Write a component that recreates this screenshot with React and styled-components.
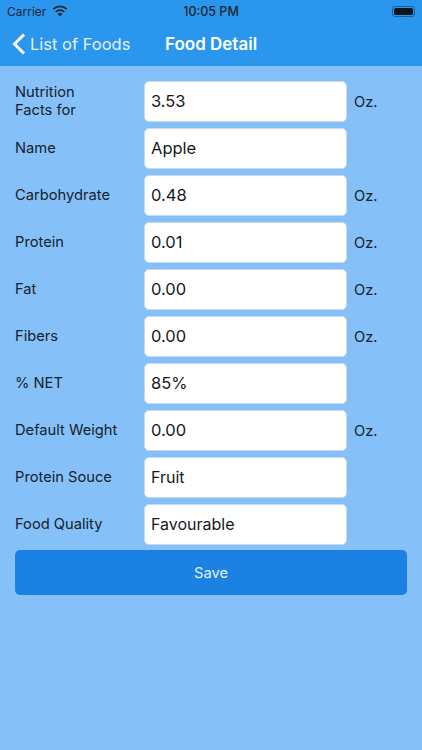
import styled, { createGlobalStyle } from "styled-components";

const GlobalStyle = createGlobalStyle`
  html, body {
    margin: 0;
    padding: 0;
    background: #85c1f8;
  }
  * {
    box-sizing: border-box;
  }
`;

const fields = [
  { label: "Nutrition\nFacts for", value: "3.53", unit: true },
  { label: "Name", value: "Apple" },
  { label: "Carbohydrate", value: "0.48", unit: true },
  { label: "Protein", value: "0.01", unit: true },
  { label: "Fat", value: "0.00", unit: true },
  { label: "Fibers", value: "0.00", unit: true },
  { label: "% NET", value: "85%" },
  { label: "Default Weight", value: "0.00", unit: true },
  { label: "Protein Souce", value: "Fruit", small: true },
  { label: "Food Quality", value: "Favourable", small: true },
];

export default function App() {
  return (
    <Screen>
      <GlobalStyle />
      <Header>
        <StatusBar>
          <Carrier>
            Carrier
            <svg width="16" height="12" viewBox="0 0 16 12">
              <path
                d="M8 11.500 5.600 8.900a3.400 3.400 0 0 1 4.800 0L8 11.500Z"
                fill="#1c2733"
              />
              <path
                d="M3.700 6.900a6.100 6.100 0 0 1 8.600 0"
                fill="none"
                stroke="#1c2733"
                strokeWidth="1.700"
              />
              <path
                d="M1.200 4.200a9.700 9.700 0 0 1 13.600 0"
                fill="none"
                stroke="#1c2733"
                strokeWidth="1.700"
              />
            </svg>
          </Carrier>
          <Clock>10:05 PM</Clock>
          <Battery>
            <BatteryFill />
          </Battery>
        </StatusBar>
        <NavBar>
          <BackLink>
            <svg width="14" height="22" viewBox="0 0 14 22">
              <path
                d="M12 1.500 2.500 11l9.500 9.500"
                fill="none"
                stroke="#fff"
                strokeWidth="3"
              />
            </svg>
            List of Foods
          </BackLink>
          <Title>Food Detail</Title>
        </NavBar>
      </Header>
      <Form>
        {fields.map((field) => (
          <Row key={field.label}>
            <Label>{field.label}</Label>
            <Field $small={field.small}>{field.value}</Field>
            {field.unit && <Unit>Oz.</Unit>}
          </Row>
        ))}
        <SaveButton type="button">Save</SaveButton>
      </Form>
    </Screen>
  );
}

const Screen = styled.div`
  width: 422px;
  height: 750px;
  overflow: hidden;
  background: #85c1f8;
  font-family: Inter, "Liberation Sans", sans-serif;
`;

const Header = styled.header`
  height: 66px;
  background: #2b96ee;
`;

const StatusBar = styled.div`
  height: 22px;
  padding: 0 7px;
  display: grid;
  grid-template-columns: 1fr auto 1fr;
  align-items: center;
  color: #1c2733;
`;

const Carrier = styled.div`
  display: flex;
  align-items: center;
  gap: 6px;
  font-size: 12px;
`;

const Clock = styled.div`
  font-size: 12.5px;
  font-weight: 500;
`;

const Battery = styled.div`
  justify-self: end;
  width: 23px;
  height: 11px;
  padding: 1px;
  border: 1px solid #1c5f96;
  border-radius: 3px;
`;

const BatteryFill = styled.div`
  height: 100%;
  border-radius: 1.5px;
  background: #0d1620;
`;

const NavBar = styled.nav`
  height: 44px;
  display: flex;
  align-items: center;
  padding: 0 0 0 12px;
  color: #fff;
`;

const BackLink = styled.div`
  width: 153px;
  display: flex;
  align-items: center;
  gap: 4px;
  font-size: 16.5px;
  color: #e3f1fd;
`;

const Title = styled.div`
  font-size: 17px;
  font-weight: 600;
`;

const Form = styled.main`
  padding: 15px 15px 0;
  display: flex;
  flex-direction: column;
  gap: 7px;
`;

const Row = styled.div`
  height: 40px;
  display: flex;
  align-items: center;
`;

const Label = styled.div`
  width: 129px;
  font-size: 14.7px;
  line-height: 18px;
  color: #15212c;
  white-space: pre-line;
`;

const Field = styled.div`
  width: 203px;
  height: 41px;
  padding: 0 6px;
  display: flex;
  align-items: center;
  background: #fff;
  border: 1px solid #c9d9e8;
  border-radius: 5px;
  color: #15191d;
  font-size: ${(p) => (p.$small ? "16px" : "16.5px")};
`;

const Unit = styled.div`
  margin-left: 7px;
  padding-top: 1px;
  font-size: 14.7px;
  color: #15212c;
`;

const SaveButton = styled.button`
  height: 45px;
  margin-top: -1px;
  width: 392px;
  border: none;
  border-radius: 5px;
  background: #1b82e3;
  color: #e3f1fd;
  font-family: inherit;
  font-size: 14.7px;
`;
